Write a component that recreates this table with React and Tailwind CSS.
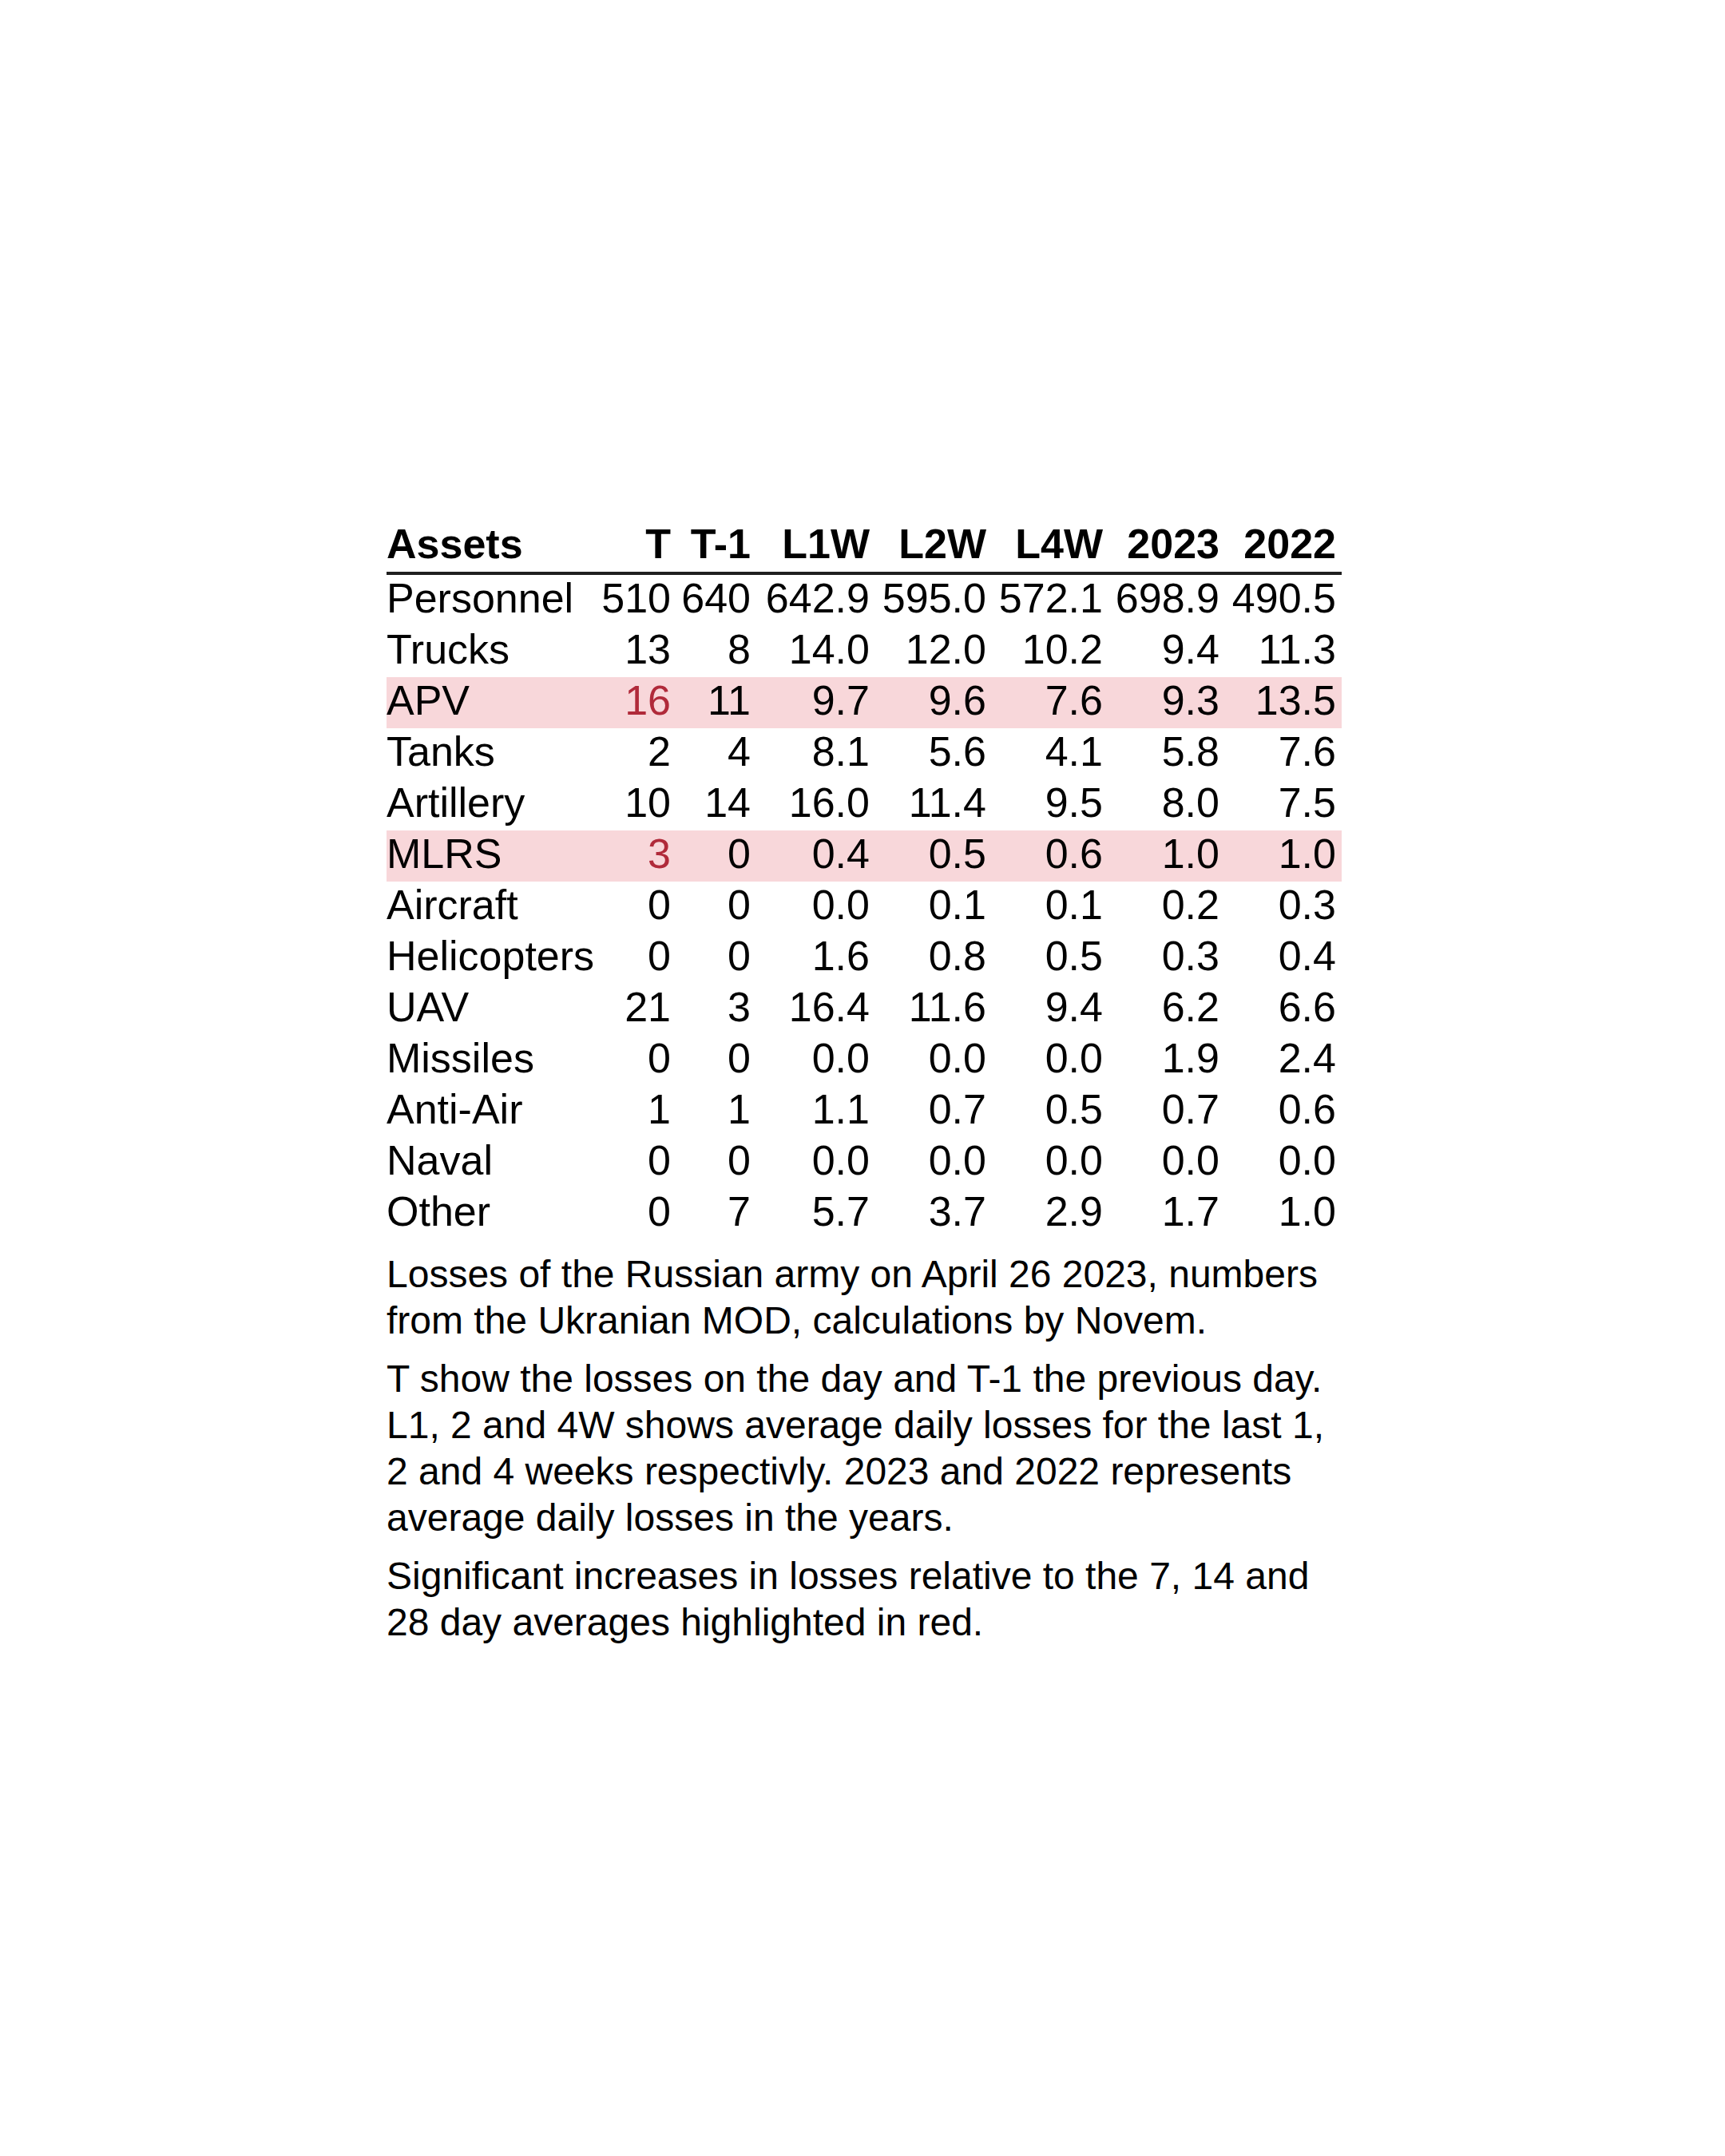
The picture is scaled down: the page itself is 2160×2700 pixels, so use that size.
import React from "react";

const cols = ["T", "T-1", "L1W", "L2W", "L4W", "2023", "2022"];

const rows = [
  { name: "Personnel", v: ["510", "640", "642.9", "595.0", "572.1", "698.9", "490.5"] },
  { name: "Trucks", v: ["13", "8", "14.0", "12.0", "10.2", "9.4", "11.3"] },
  { name: "APV", v: ["16", "11", "9.7", "9.6", "7.6", "9.3", "13.5"], hl: true },
  { name: "Tanks", v: ["2", "4", "8.1", "5.6", "4.1", "5.8", "7.6"] },
  { name: "Artillery", v: ["10", "14", "16.0", "11.4", "9.5", "8.0", "7.5"] },
  { name: "MLRS", v: ["3", "0", "0.4", "0.5", "0.6", "1.0", "1.0"], hl: true },
  { name: "Aircraft", v: ["0", "0", "0.0", "0.1", "0.1", "0.2", "0.3"] },
  { name: "Helicopters", v: ["0", "0", "1.6", "0.8", "0.5", "0.3", "0.4"] },
  { name: "UAV", v: ["21", "3", "16.4", "11.6", "9.4", "6.2", "6.6"] },
  { name: "Missiles", v: ["0", "0", "0.0", "0.0", "0.0", "1.9", "2.4"] },
  { name: "Anti-Air", v: ["1", "1", "1.1", "0.7", "0.5", "0.7", "0.6"] },
  { name: "Naval", v: ["0", "0", "0.0", "0.0", "0.0", "0.0", "0.0"] },
  { name: "Other", v: ["0", "7", "5.7", "3.7", "2.9", "1.7", "1.0"] },
];

const grid =
  "grid grid-cols-[256px_107px_100px_149px_146px_146px_146px_146px] leading-[58px] pb-[6px]";

export default function App() {
  return (
    <div className="min-h-[2700px] w-[2160px] bg-white font-['Liberation_Sans',Arial,sans-serif] text-black">
      <div className="pt-[652px] pl-[484px]">
        <div className="w-[1196px]">
          <div className={`${grid} h-[68px] border-b-4 border-[#1f1f1f] text-[52px] font-bold`}>
            <div className="whitespace-nowrap">Assets</div>
            {cols.map((c) => (
              <div key={c} className="text-right pr-[7px] whitespace-nowrap">
                {c}
              </div>
            ))}
          </div>
          {rows.map((r) => (
            <div
              key={r.name}
              className={`${grid} h-[64px] text-[52px] ${r.hl ? "bg-[#f8d7da]" : ""}`}
            >
              <div className="whitespace-nowrap">{r.name}</div>
              {r.v.map((x, i) => (
                <div
                  key={i}
                  className={`text-right pr-[7px] whitespace-nowrap ${
                    r.hl && i === 0 ? "text-[#b02a3a]" : ""
                  }`}
                >
                  {x}
                </div>
              ))}
            </div>
          ))}
          <div className="pt-[15px] text-[48px] leading-[58px] flex flex-col gap-[15px]">
            <p>
              Losses of the Russian army on April 26 2023, numbers from the
              Ukranian MOD, calculations by Novem.
            </p>
            <p>
              T show the losses on the day and T-1 the previous day. L1, 2 and
              4W shows average daily losses for the last 1, 2 and 4 weeks
              respectivly. 2023 and 2022 represents average daily losses in the
              years.
            </p>
            <p>
              Significant increases in losses relative to the 7, 14 and 28 day
              averages highlighted in red.
            </p>
          </div>
        </div>
      </div>
    </div>
  );
}
